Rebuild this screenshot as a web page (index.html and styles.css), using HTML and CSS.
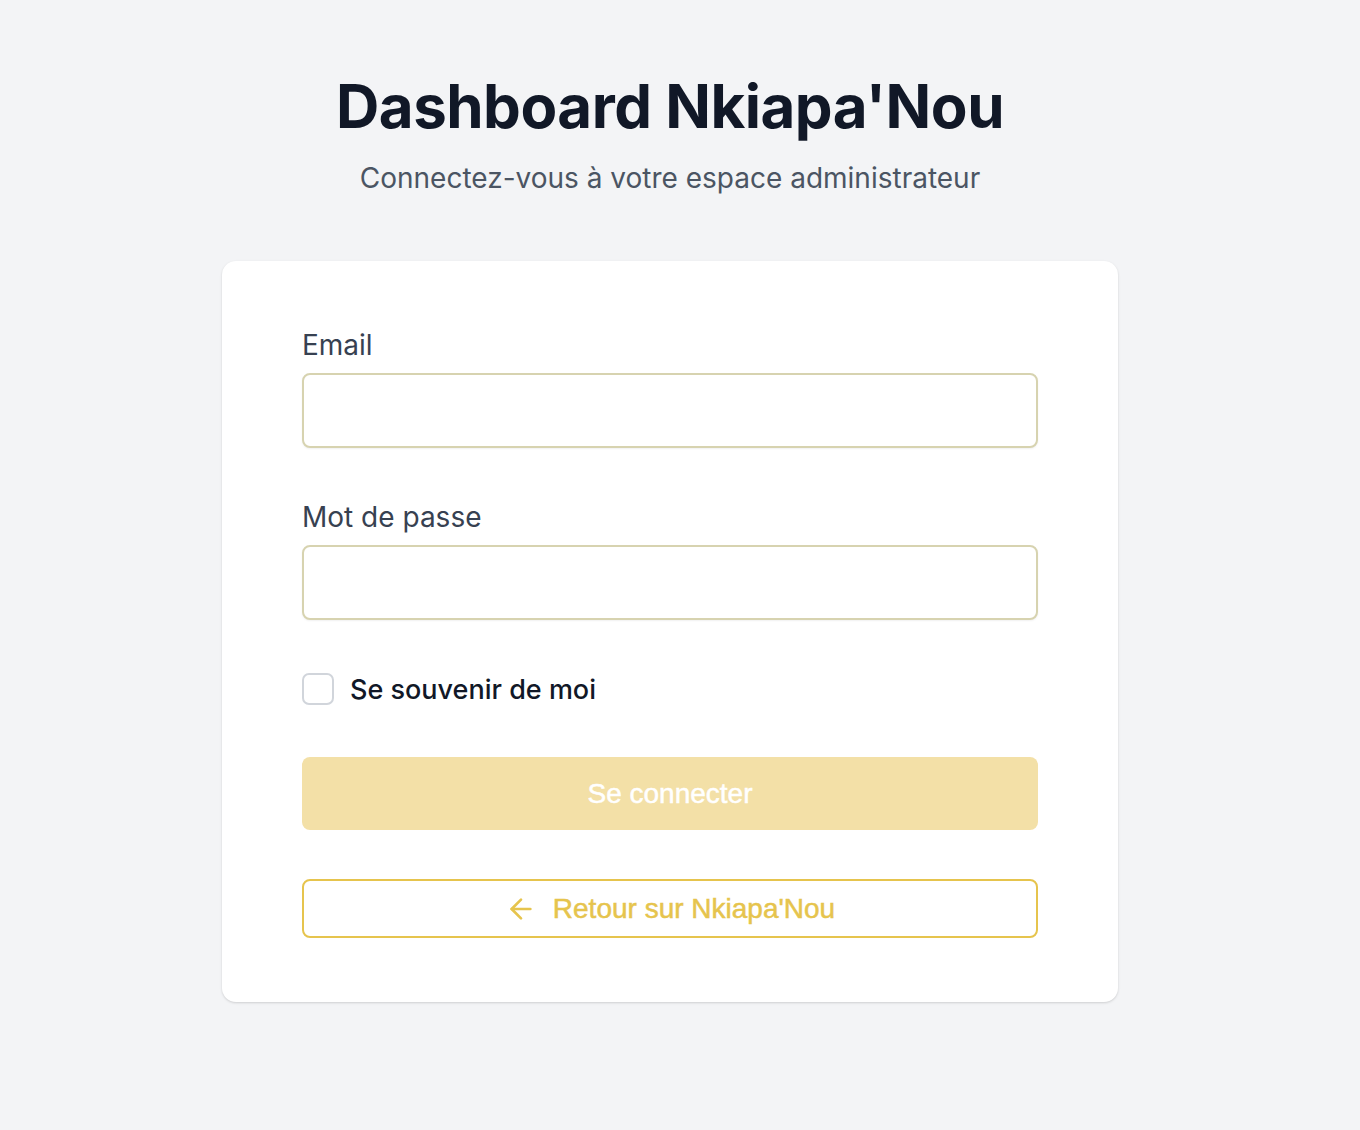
FILE: index.html
```html
<!DOCTYPE html>
<html lang="fr">
<head>
<meta charset="utf-8">
<title>Dashboard Nkiapa'Nou</title>
<link rel="stylesheet" href="styles.css">
</head>
<body>
<main class="page">
  <header class="head">
    <h1 class="title">Dashboard Nkiapa'Nou</h1>
    <p class="subtitle">Connectez-vous à votre espace administrateur</p>
  </header>
  <section class="card">
    <form class="form">
      <div class="field">
        <label class="label" for="email">Email</label>
        <input class="input" id="email" type="email">
      </div>
      <div class="field">
        <label class="label" for="pw">Mot de passe</label>
        <input class="input" id="pw" type="password">
      </div>
      <label class="remember">
        <span class="box"></span>
        <span class="remember-text">Se souvenir de moi</span>
      </label>
      <button class="btn-primary" type="button">Se connecter</button>
      <a class="btn-back" href="#">
        <svg class="arrow" viewBox="0 0 24 24" width="32" height="32" fill="none" stroke="currentColor" stroke-width="2" stroke-linecap="round" stroke-linejoin="round"><path d="m12 19-7-7 7-7"/><path d="M19 12H5"/></svg>
        <span>Retour sur Nkiapa'Nou</span>
      </a>
    </form>
  </section>
</main>
</body>
</html>
```

FILE: styles.css
```css
* { box-sizing: border-box; }
html, body { margin: 0; padding: 0; }
body {
  background: #f3f4f6;
  font-family: Inter, "Noto Sans", sans-serif;
  min-height: 1130px;
}
.page {
  display: flex;
  flex-direction: column;
  align-items: center;
  padding-top: 76px;
  padding-right: 20px;
}
.head { text-align: center; }
.title {
  margin: 0;
  font-size: 60px;
  line-height: 60px;
  font-weight: 700;
  color: #111827;
  letter-spacing: -0.5px;
}
.subtitle {
  margin: 22px 0 0;
  font-size: 28px;
  line-height: 40px;
  color: #4b5563;
}
.card {
  margin-top: 63px;
  width: 896px;
  background: #fff;
  border-radius: 14px;
  box-shadow: 0 1px 3px rgba(0,0,0,0.10), 0 1px 2px rgba(0,0,0,0.06);
  padding: 64px 80px 64px;
}
.form { display: flex; flex-direction: column; }
.field { display: flex; flex-direction: column; gap: 8px; margin-bottom: 49px; }
.field + .field { margin-bottom: 53px; }
.label {
  font-size: 28px;
  line-height: 40px;
  color: #374151;
  font-weight: 400;
}
.input {
  height: 75px;
  border: 2px solid #d7d3b0;
  border-radius: 8px;
  background: #fff;
  box-shadow: 0 1px 2px rgba(0,0,0,0.06);
  font: inherit;
  outline: none;
}
.remember {
  display: flex;
  align-items: center;
  gap: 16px;
  height: 32px;
}
.box {
  width: 32px;
  height: 32px;
  border: 2px solid #d1d5db;
  border-radius: 7px;
  background: #fff;
}
.remember-text {
  font-size: 27px;
  color: #111827;
  font-weight: 500;
}
.btn-primary {
  margin-top: 52px;
  height: 73px;
  border: 0;
  border-radius: 8px;
  background: #f3e0a7;
  color: #fff;
  font-family: "Liberation Sans", Arial, sans-serif;
  font-size: 28px;
  -webkit-text-stroke: 0.5px currentColor;
}
.btn-back {
  margin-top: 49px;
  height: 59px;
  border: 2px solid #e6c44d;
  border-radius: 8px;
  display: flex;
  align-items: center;
  justify-content: center;
  gap: 16px;
  color: #e6c44d;
  text-decoration: none;
  font-family: "Liberation Sans", Arial, sans-serif;
  font-size: 28px;
  -webkit-text-stroke: 0.5px currentColor;
}
.arrow { display: block; }
```
